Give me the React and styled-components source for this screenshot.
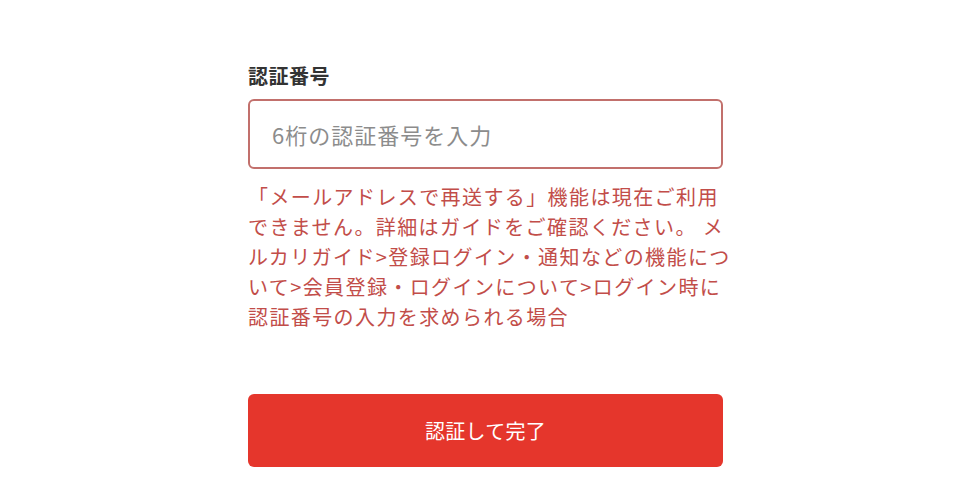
import React from 'react';
import styled, { createGlobalStyle } from 'styled-components';

const GlobalStyle = createGlobalStyle`
  html, body {
    margin: 0;
    padding: 0;
    background: #ffffff;
  }
  body {
    font-family: "Noto Sans CJK JP", "Noto Sans", sans-serif;
    color: #333333;
  }
`;

const Page = styled.div`
  width: 960px;
  height: 500px;
  box-sizing: border-box;
  padding: 62px 0 0 248px;
  overflow: hidden;
`;

const Form = styled.form`
  display: flex;
  flex-direction: column;
  width: 475px;
`;

const Label = styled.label`
  font-size: 20px;
  font-weight: 700;
  line-height: 28px;
  letter-spacing: 0.5px;
  color: #333333;
  margin-bottom: 9px;
`;

const CodeInput = styled.input`
  box-sizing: border-box;
  width: 100%;
  height: 70px;
  padding: 0 22px;
  border: 2px solid #c2706c;
  border-radius: 6px;
  font-family: inherit;
  font-size: 22px;
  letter-spacing: 1px;
  color: #333333;
  outline: none;
  background: #ffffff;

  &::placeholder {
    color: #8c8c8c;
  }
`;

const ErrorText = styled.p`
  margin: 13px 0 0;
  font-size: 20px;
  line-height: 30px;
  letter-spacing: 1.4px;
  color: #c24d49;
  white-space: nowrap;
`;

const SubmitButton = styled.button`
  margin-top: 62px;
  height: 73px;
  width: 100%;
  border: none;
  border-radius: 6px;
  background: #e5362c;
  color: #ffffff;
  font-family: inherit;
  font-size: 20px;
  letter-spacing: 0.3px;
  cursor: pointer;
`;

const errorLines = [
  '「メールアドレスで再送する」機能は現在ご利用',
  'できません。詳細はガイドをご確認ください。 メ',
  'ルカリガイド>登録ログイン・通知などの機能につ',
  'いて>会員登録・ログインについて>ログイン時に',
  '認証番号の入力を求められる場合',
];

export default function App() {
  return (
    <>
      <GlobalStyle />
      <Page>
        <Form onSubmit={(e) => e.preventDefault()}>
          <Label htmlFor="code">認証番号</Label>
          <CodeInput id="code" type="text" placeholder="6桁の認証番号を入力" />
          <ErrorText>
            {errorLines.map((line, i) => (
              <React.Fragment key={i}>
                {line}
                {i < errorLines.length - 1 && <br />}
              </React.Fragment>
            ))}
          </ErrorText>
          <SubmitButton type="submit">認証して完了</SubmitButton>
        </Form>
      </Page>
    </>
  );
}
